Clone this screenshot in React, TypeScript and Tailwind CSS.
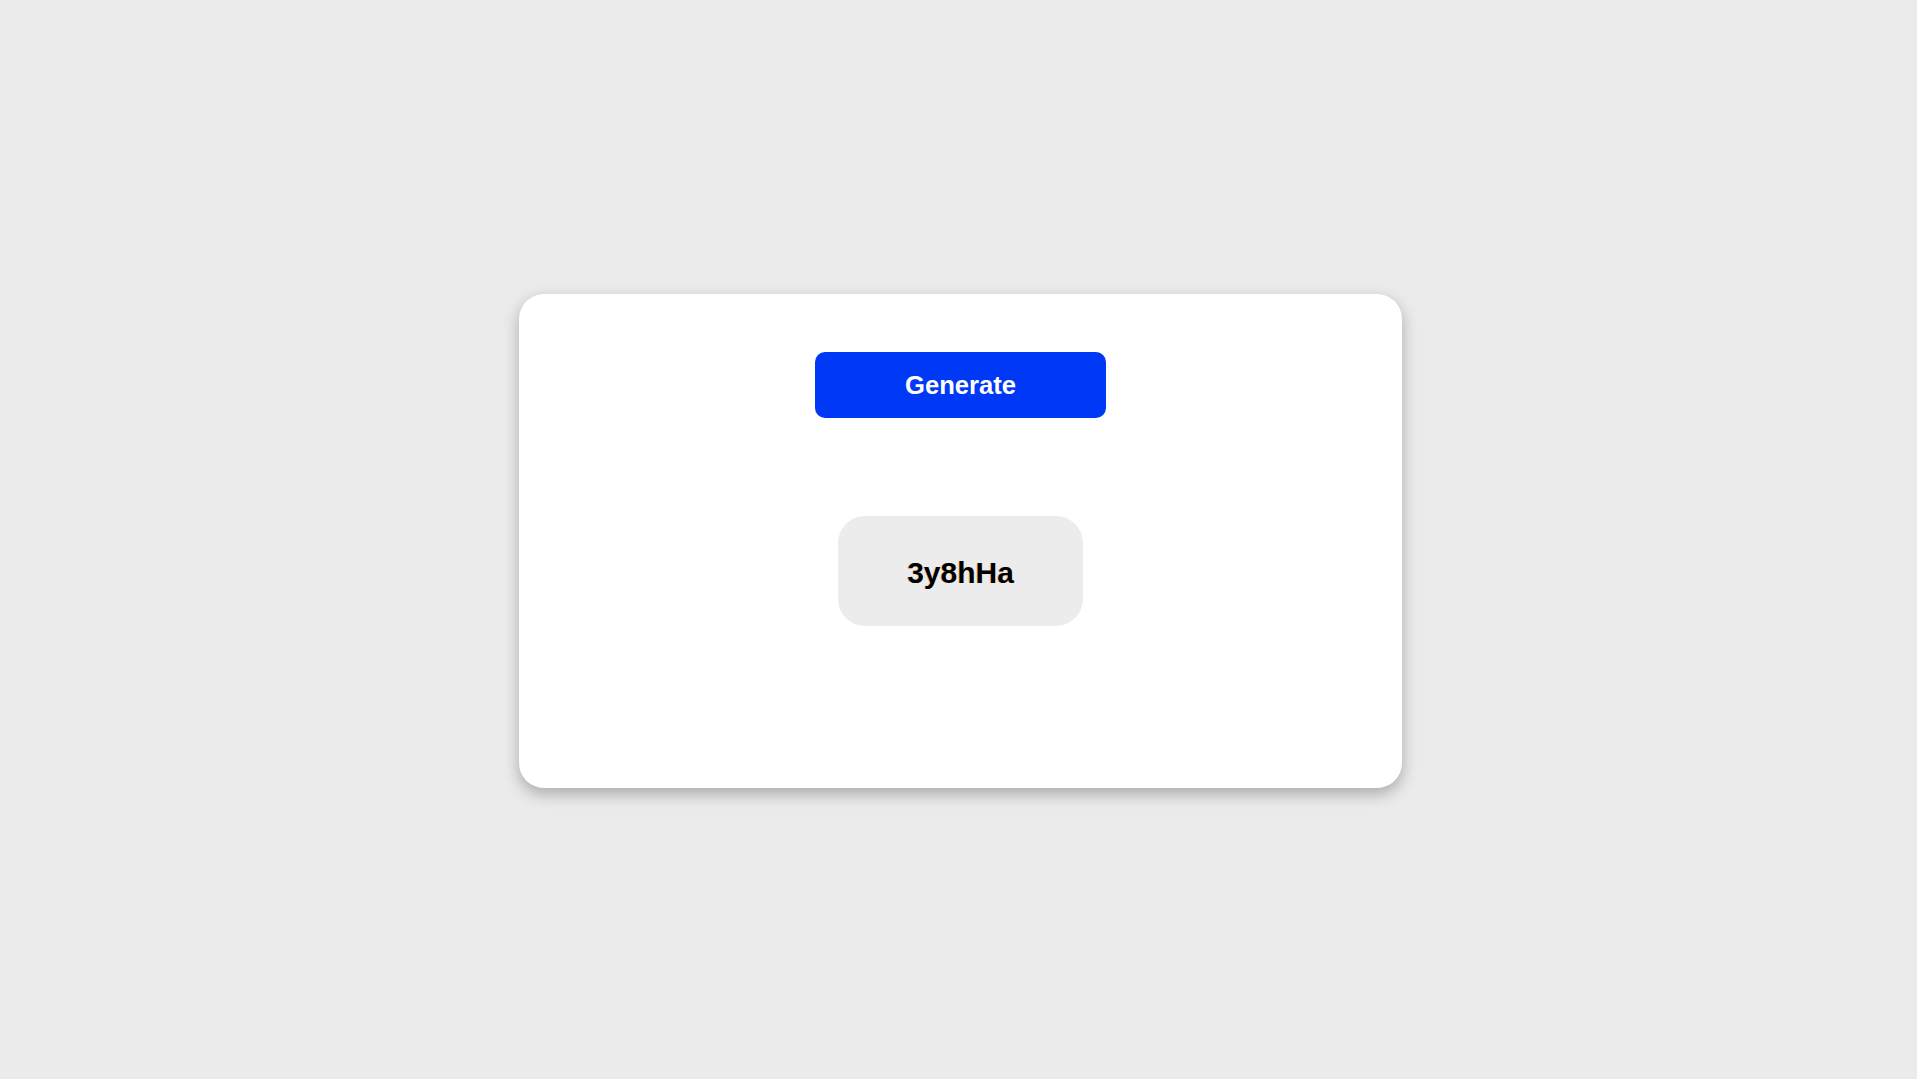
export default function App() {
  return (
    <div className="min-h-screen w-full bg-[#ebebeb] flex items-center justify-center font-['Liberation_Sans',Arial,sans-serif]">
      {/* Card */}
      <div className="ml-[4px] mt-[3px] w-[883px] h-[494px] bg-white rounded-[25px] shadow-[0_6px_16px_rgba(0,0,0,0.28)] flex flex-col items-center pt-[58px]">
        <button className="w-[291px] h-[66px] rounded-[10px] bg-[#0039f5] text-white font-bold text-[25.6px]">
          Generate
        </button>

        {/* Captcha */}
        <div className="mt-[98px] w-[245px] h-[110px] rounded-[27px] bg-[#ececec] flex items-center justify-center">
          <span className="text-[30px] font-bold text-black pt-[2px] [text-shadow:-1px_0_0_rgba(255,140,0,0.35)]">
            3y8hHa
          </span>
        </div>
      </div>
    </div>
  );
}
